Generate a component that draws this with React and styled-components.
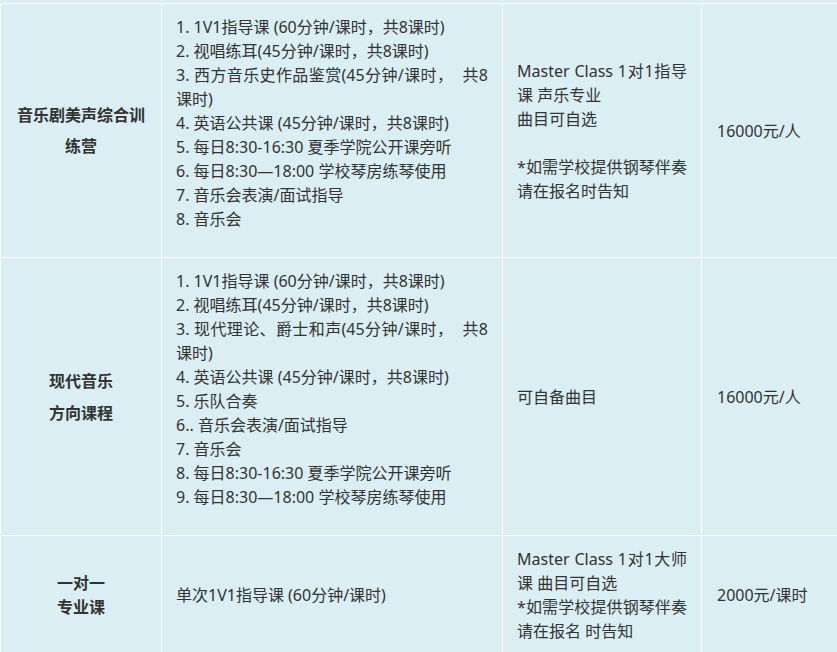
import React from "react";
import styled, { createGlobalStyle } from "styled-components";

const GlobalStyle = createGlobalStyle`
  html, body {
    margin: 0;
    padding: 0;
    background: #daeef3;
    overflow: hidden;
  }
  body {
    font-family: "Noto Sans", "Noto Sans CJK SC", sans-serif;
    color: #333;
  }
`;

const Table = styled.table`
  margin-top: 3px;
  width: 852px;
  table-layout: fixed;
  border-collapse: separate;
  border-spacing: 0;
  border-top: 1px solid #fff;
  border-left: 1px solid #fff;
  font-size: 16px;
  line-height: 24px;
`;

const Col = styled.col`
  width: ${(p) => p.$w}px;
`;

const Cell = styled.td`
  box-sizing: border-box;
  padding: 11px 14px 11px ${(p) => p.$pl || 14}px;
  border-right: 1px solid #fff;
  border-bottom: 1px solid #fff;
  vertical-align: middle;
  text-align: ${(p) => (p.$center ? "center" : "left")};
`;

const Title = styled.div`
  font-weight: 700;
  line-height: ${(p) => p.$leading}px;
`;

const Block = styled.div`
  text-align: justify;
  padding-bottom: ${(p) => (p.$tail ? 15 : 0)}px;
`;

const Para = styled.div`
  min-height: 24px;
`;

// wrapped line, stretched like the original justified text
const FullLine = styled.span`
  display: block;
  text-align: justify;
  text-align-last: justify;
`;

const rows = [
  {
    title: ["音乐剧美声综合训", "练营"],
    leading: 31,
    items: [
      ["1. 1V1指导课 (60分钟/课时，共8课时)"],
      ["2. 视唱练耳(45分钟/课时，共8课时)"],
      ["3. 西方音乐史作品鉴赏(45分钟/课时，\u00a0 共8", "课时)"],
      ["4. 英语公共课 (45分钟/课时，共8课时)"],
      ["5. 每日8:30-16:30 夏季学院公开课旁听"],
      ["6. 每日8:30—18:00 学校琴房练琴使用"],
      ["7. 音乐会表演/面试指导"],
      ["8. 音乐会"],
    ],
    notes: [
      ["Master Class 1对1指导", "课 声乐专业"],
      ["曲目可自选"],
      [""],
      ["*如需学校提供钢琴伴奏", "请在报名时告知"],
    ],
    price: "16000元/人",
  },
  {
    title: ["现代音乐", "方向课程"],
    leading: 32,
    items: [
      ["1. 1V1指导课 (60分钟/课时，共8课时)"],
      ["2. 视唱练耳(45分钟/课时，共8课时)"],
      ["3. 现代理论、爵士和声(45分钟/课时，\u00a0 共8", "课时)"],
      ["4. 英语公共课 (45分钟/课时，共8课时)"],
      ["5. 乐队合奏"],
      ["6.. 音乐会表演/面试指导"],
      ["7. 音乐会"],
      ["8. 每日8:30-16:30 夏季学院公开课旁听"],
      ["9. 每日8:30—18:00 学校琴房练琴使用"],
    ],
    notes: [["可自备曲目"]],
    price: "16000元/人",
  },
  {
    title: ["一对一", "专业课"],
    leading: 24,
    items: [["单次1V1指导课 (60分钟/课时)"]],
    notes: [
      ["Master Class 1对1大师", "课 曲目可自选"],
      ["*如需学校提供钢琴伴奏", "请在报名 时告知"],
    ],
    price: "2000元/课时",
  },
];

const Lines = ({ paras, tail }) => (
  <Block $tail={tail}>
    {paras.map((lines, i) => (
      <Para key={i}>
        {lines.map((line, j) =>
          j < lines.length - 1 ? (
            <FullLine key={j}>{line}</FullLine>
          ) : (
            <React.Fragment key={j}>{line || "\u00a0"}</React.Fragment>
          )
        )}
      </Para>
    ))}
  </Block>
);

const App = () => {
  return (
    <>
      <GlobalStyle />
      <Table>
        <colgroup>
          <Col $w={161} />
          <Col $w={341} />
          <Col $w={199} />
          <Col $w={150} />
        </colgroup>
        <tbody>
          {rows.map((row, i) => (
            <tr key={i}>
              <Cell $center>
                <Title $leading={row.leading}>
                  {row.title.map((t) => (
                    <div key={t}>{t}</div>
                  ))}
                </Title>
              </Cell>
              <Cell>
                <Lines paras={row.items} tail={row.items.length > 1} />
              </Cell>
              <Cell>
                <Lines paras={row.notes} />
              </Cell>
              <Cell $pl={15}>{row.price}</Cell>
            </tr>
          ))}
        </tbody>
      </Table>
    </>
  );
};

export default App;
